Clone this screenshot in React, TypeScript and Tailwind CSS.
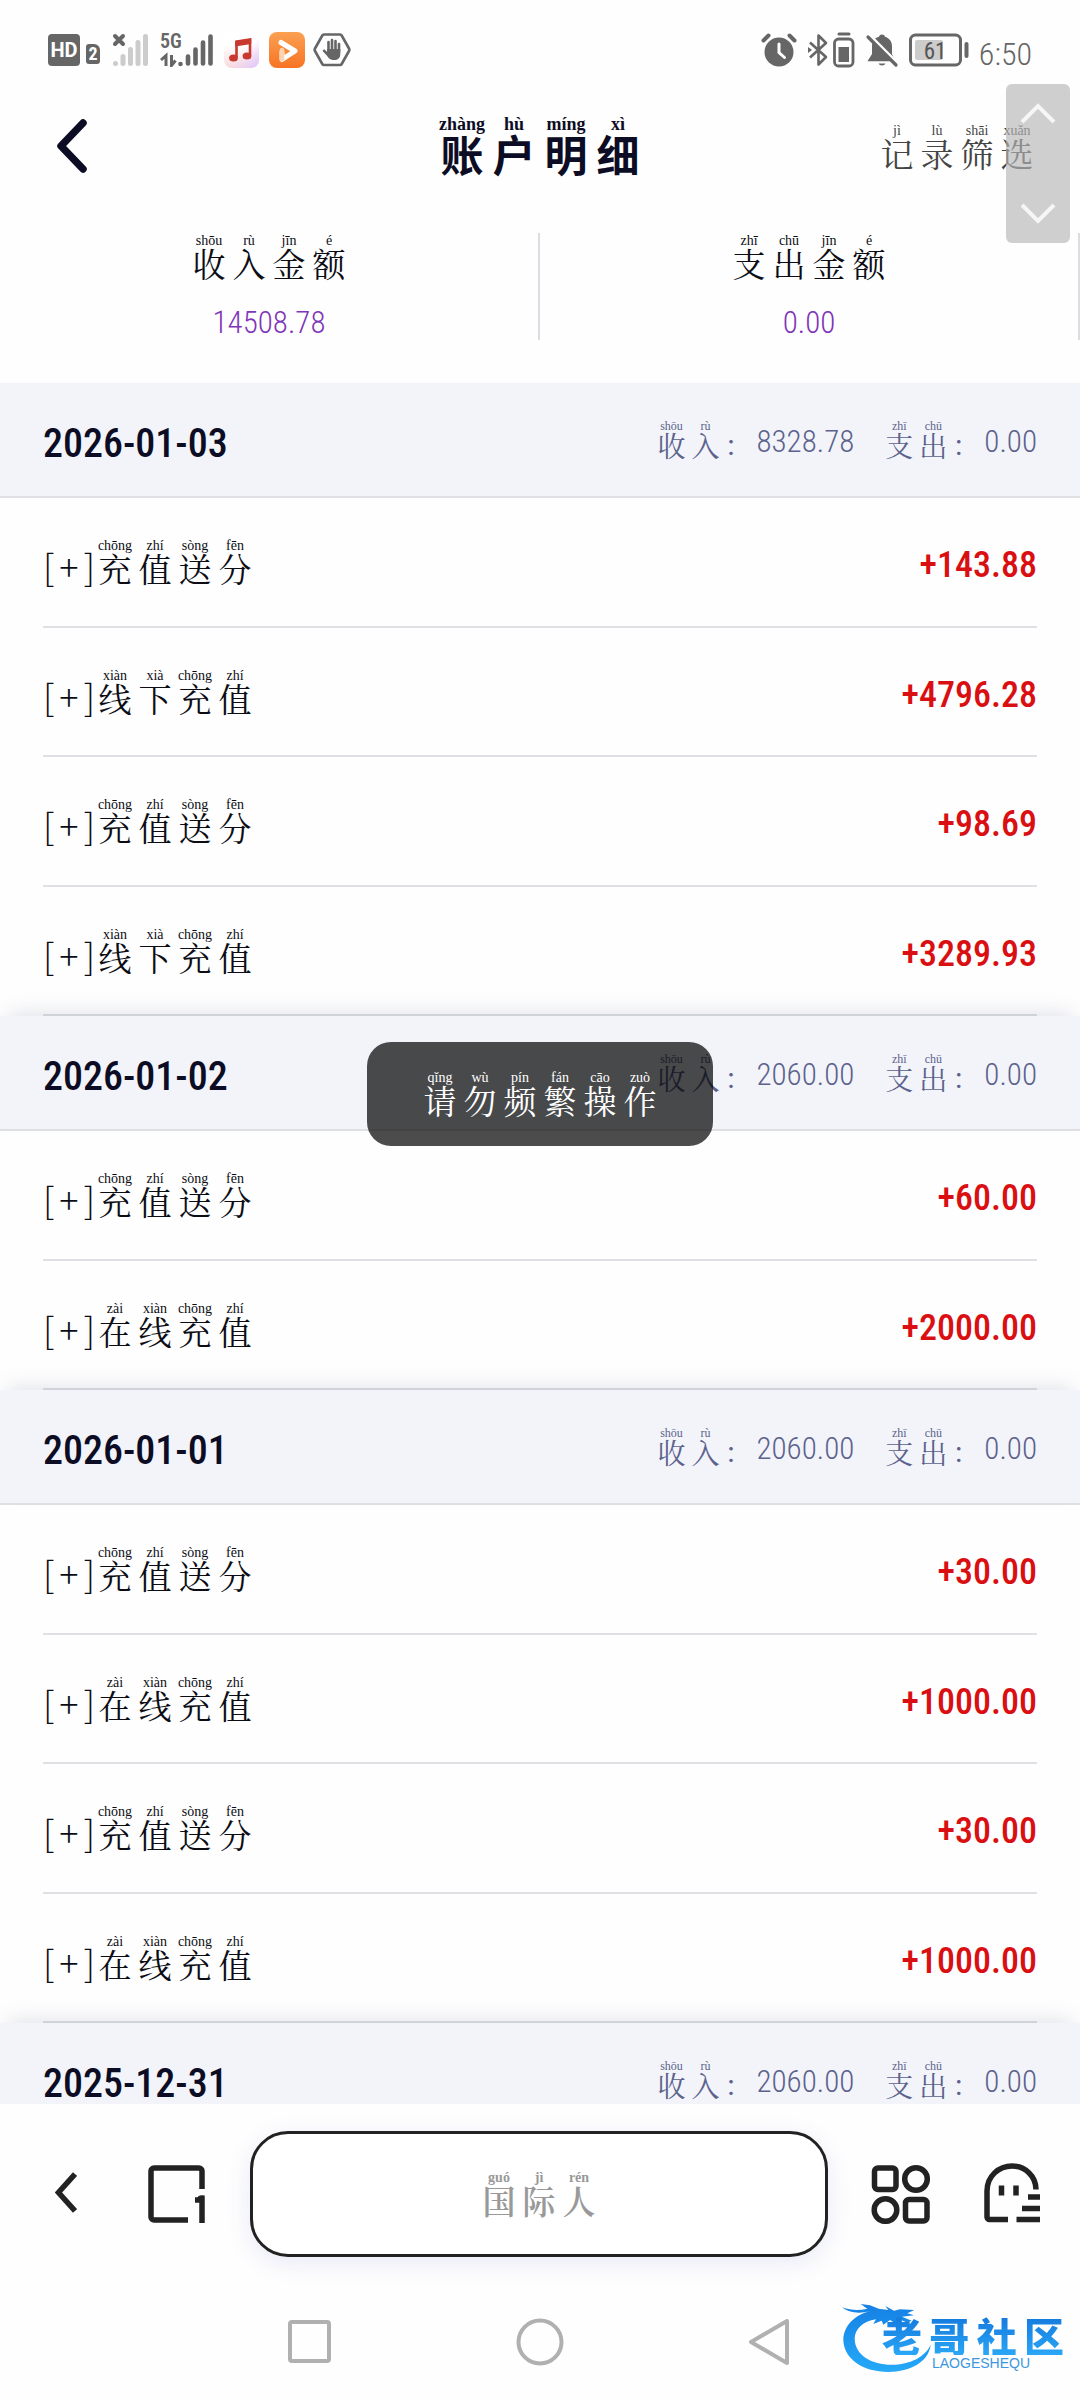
import type { ReactNode } from "react";

type Syllable = [char: string, pinyin: string];
type RubySize = "title" | "body" | "small";

const WORDS = {
  title: [["账", "zhàng"], ["户", "hù"], ["明", "míng"], ["细", "xì"]],
  filter: [["记", "jì"], ["录", "lù"], ["筛", "shāi"], ["选", "xuǎn"]],
  incomeTotal: [["收", "shōu"], ["入", "rù"], ["金", "jīn"], ["额", "é"]],
  expenseTotal: [["支", "zhī"], ["出", "chū"], ["金", "jīn"], ["额", "é"]],
  income: [["收", "shōu"], ["入", "rù"]],
  expense: [["支", "zhī"], ["出", "chū"]],
  bonus: [["充", "chōng"], ["值", "zhí"], ["送", "sòng"], ["分", "fēn"]],
  offline: [["线", "xiàn"], ["下", "xià"], ["充", "chōng"], ["值", "zhí"]],
  online: [["在", "zài"], ["线", "xiàn"], ["充", "chōng"], ["值", "zhí"]],
  toast: [["请", "qǐng"], ["勿", "wù"], ["频", "pín"], ["繁", "fán"], ["操", "cāo"], ["作", "zuò"]],
  site: [["国", "guó"], ["际", "jì"], ["人", "rén"]],
} satisfies Record<string, Syllable[]>;

const RUBY: Record<RubySize, { cell: string; char: string; pinyin: string }> = {
  title: {
    cell: "w-[52px] pb-0.5",
    char: "font-['Noto_Sans_CJK_SC',sans-serif] text-[43px] leading-[40px] font-bold",
    pinyin: "text-[18px] leading-[18px] font-bold",
  },
  body: {
    cell: "w-10 pb-0.5",
    char: "text-[33px] leading-[30px]",
    pinyin: "text-[14px] leading-[14px]",
  },
  small: {
    cell: "w-[34px] pb-0.5",
    char: "text-[28px] leading-[26px]",
    pinyin: "text-[12px] leading-[12px]",
  },
};

function Pinyin({ word, size = "body" }: { word: Syllable[]; size?: RubySize }) {
  const s = RUBY[size];
  return (
    <span className="flex">
      {word.map(([char, pinyin], i) => (
        <ruby key={i} className={`flex flex-col-reverse items-center ${s.cell}`}>
          <span className={s.char}>{char}</span>
          <rt className={`block font-['Liberation_Serif',serif] whitespace-nowrap ${s.pinyin}`}>{pinyin}</rt>
        </ruby>
      ))}
    </span>
  );
}

interface Day {
  date: string;
  income: string;
  rows: [Syllable[], string][];
}

const DAYS: Day[] = [
  {
    date: "2026-01-03",
    income: "8328.78",
    rows: [
      [WORDS.bonus, "+143.88"],
      [WORDS.offline, "+4796.28"],
      [WORDS.bonus, "+98.69"],
      [WORDS.offline, "+3289.93"],
    ],
  },
  { date: "2026-01-02", income: "2060.00", rows: [[WORDS.bonus, "+60.00"], [WORDS.online, "+2000.00"]] },
  {
    date: "2026-01-01",
    income: "2060.00",
    rows: [
      [WORDS.bonus, "+30.00"],
      [WORDS.online, "+1000.00"],
      [WORDS.bonus, "+30.00"],
      [WORDS.online, "+1000.00"],
    ],
  },
  { date: "2025-12-31", income: "2060.00", rows: [] },
];

function StatusBar() {
  return (
    <div className="flex h-[84px] shrink-0 items-center justify-between pt-4 pr-12 pl-12 font-['Roboto_Condensed',sans-serif] text-[#666]">
      <div className="flex items-center">
        <span className="flex h-8 w-8 items-center justify-center rounded bg-[#666] font-['Roboto',sans-serif] text-[20px] leading-[32px] font-bold text-white">HD</span>
        <span className="mt-2 ml-1.5 flex h-5 w-[14px] items-center justify-center rounded-[3px] rounded-tr-[6px] bg-[#666] text-[18px] leading-[20px] font-bold text-white">2</span>
        <svg className="ml-3" width="36" height="34" viewBox="0 0 36 34" fill="none" strokeLinecap="round">
          <path d="M3 3l8 8M11 3l-8 8" stroke="#666" strokeWidth="4" />
          <path d="M3.500 30.500v0M11 23.500v7M18.500 16.500v14M26 9.500v21M33.500 3.500v27" stroke="#ccc" strokeWidth="5" />
        </svg>
        <svg className="ml-3" width="54" height="34" viewBox="0 0 54 34" fill="none">
          <text x="0" y="15" fontSize="20" fontWeight="600" fill="#666">5G</text>
          <path d="M1 27l5-4.500V33M11.500 22v10.500l4-5" stroke="#666" strokeWidth="3" />
          <path d="M20.500 31v0M28 23.500v7M35.500 16.500v14M43 9.500v21M50.500 3.500v27" stroke="#666" strokeWidth="4.600" strokeLinecap="round" />
        </svg>
        <svg className="ml-2.5" width="35" height="36" viewBox="0 0 35 36">
          <defs>
            <linearGradient id="music" x1="0" y1="0" x2="0" y2="1">
              <stop offset="0.350" stopColor="#fff" />
              <stop offset="1" stopColor="#f9d9dc" />
            </linearGradient>
            <linearGradient id="tint" x1="0" y1="0" x2="1" y2="1">
              <stop offset="0.550" stopColor="#e6d0ff" stopOpacity="0" />
              <stop offset="1" stopColor="#dcc4ff" />
            </linearGradient>
          </defs>
          <rect width="35" height="36" rx="8" fill="url(#music)" />
          <rect width="35" height="36" rx="8" fill="url(#tint)" />
          <path d="M12.500 25.500V10l13.500-2v15.500" fill="none" stroke="#c8382e" strokeWidth="2.600" />
          <path d="M11.200 8.500L27.300 6v6l-16.100 2.500z" fill="#c8382e" />
          <ellipse cx="9.500" cy="26" rx="4.400" ry="3.500" fill="#c8382e" />
          <ellipse cx="23" cy="24" rx="4.400" ry="3.500" fill="#c8382e" />
        </svg>
        <svg className="ml-2.5" width="36" height="36" viewBox="0 0 36 36">
          <defs>
            <linearGradient id="play" x1="0" y1="0" x2="0" y2="1">
              <stop offset="0" stopColor="#fba052" />
              <stop offset="1" stopColor="#f77424" />
            </linearGradient>
          </defs>
          <rect width="36" height="36" rx="8" fill="url(#play)" />
          <path d="M12 10.500L26 19L13 27.500V20" fill="none" stroke="#fff" strokeWidth="5" strokeLinejoin="round" strokeLinecap="round" />
          <path d="M13 18v9" stroke="#ffd3b0" strokeWidth="4.500" strokeLinecap="round" />
        </svg>
        <svg className="ml-2" width="38" height="36" viewBox="0 0 38 36" fill="none">
          <path d="M11 2.500h16a2 2 0 0 1 1.700 1L36 16.500a2.500 2.500 0 0 1 0 2.500l-7.300 13a2 2 0 0 1-1.700 1H11a2 2 0 0 1-1.700-1L2 19a2.500 2.500 0 0 1 0-2.500l7.300-13a2 2 0 0 1 1.700-1z" stroke="#666" strokeWidth="2.600" />
          <path d="M15.500 20V10M19 19V8M22.500 19V9M26 20v-8" stroke="#666" strokeWidth="2.600" strokeLinecap="round" />
          <path d="M14.200 17h13.100v5c0 4-2.500 6-6 6-4 0-5.500-1.500-7.500-4.500L10 19.500c-.8-1.500.8-2.500 2-1.500l2.200 2z" fill="#666" />
        </svg>
      </div>
      <div className="flex items-center">
        <svg width="36" height="36" viewBox="0 0 36 36" fill="none">
          <circle cx="18" cy="20" r="14.500" fill="#666" />
          <path d="M2.500 8.500l5-5M33.500 8.500l-5-5" stroke="#666" strokeWidth="4" strokeLinecap="round" />
          <path d="M18 12v8.500l5.500 5" stroke="#fff" strokeWidth="3" strokeLinecap="round" />
        </svg>
        <svg className="ml-2.5" width="48" height="36" viewBox="0 0 48 36" fill="none" stroke="#666">
          <path d="M3 10.500L19 25l-7.500 7.500v-29L19 11 3 25.500" strokeWidth="2.600" strokeLinejoin="round" />
          <path d="M1 15l4 3-4 3z" fill="#666" stroke="none" />
          <path d="M32 2h10" strokeWidth="3" strokeLinecap="round" />
          <rect x="27.500" y="7" width="18.500" height="27" rx="4" strokeWidth="2.800" />
          <rect x="31.500" y="15" width="10.500" height="15" fill="#666" stroke="none" />
        </svg>
        <svg className="ml-2.5" width="34" height="36" viewBox="0 0 34 36" fill="none">
          <path d="M17 2.500c1.600 0 2.600.8 3 2.200 4.500 1.300 7 5 7 9.500v8l3.500 7H2.500L7 22v-8c0-4.500 2.500-8 7-9.300.4-1.400 1.400-2.200 3-2.200z" fill="#666" />
          <path d="M13.500 31.500h7c-1 2.500-6 2.500-7 0z" fill="#666" />
          <path d="M4 2.500l29 29" stroke="#fff" strokeWidth="3" />
          <path d="M3 5l28 28" stroke="#666" strokeWidth="3.200" strokeLinecap="round" />
        </svg>
        <svg className="ml-2.5" width="60" height="34" viewBox="0 0 60 34" fill="none">
          <rect x="1.500" y="2" width="50" height="30" rx="5" stroke="#666" strokeWidth="3" />
          <rect x="6" y="7" width="28" height="20" rx="2" fill="#ccc" />
          <path d="M57.500 11v12" stroke="#666" strokeWidth="4" strokeLinecap="round" />
          <text x="26" y="26" textAnchor="middle" fontSize="23" fill="#555">61</text>
        </svg>
        <span className="ml-2.5 pt-2 text-[32px] leading-[32px] font-light">6:50</span>
      </div>
    </div>
  );
}

function Total({ word, amount }: { word: Syllable[]; amount: string }) {
  return (
    <div className="flex h-[107px] flex-1 flex-col items-center gap-7 border-r-2 border-[#dcdde2] pt-px">
      <Pinyin word={word} />
      <span className="font-['Roboto_Condensed',sans-serif] text-[31px] leading-[30px] font-light text-[#7f35b8]">{amount}</span>
    </div>
  );
}

function Subtotal({ word, amount }: { word: Syllable[]; amount: string }) {
  return (
    <span className="flex items-end">
      <Pinyin word={word} size="small" />
      <span className="w-[34px] pb-0.5 pl-0.5 text-[28px] leading-[28px]">：</span>
      <span className="pb-1.5 font-['Roboto_Condensed',sans-serif] text-[31px] leading-[24px] font-light">{amount}</span>
    </span>
  );
}

function DaySection({ day, first }: { day: Day; first: boolean }) {
  return (
    <section>
      <header
        className={`relative flex h-[115px] items-center justify-between border-b-2 border-[#dfe0e4] bg-[#f2f4fa] px-[43px] ${
          first ? "" : "shadow-[0_-10px_20px_-8px_rgba(60,70,120,0.16)]"
        }`}
      >
        <h2 className="pt-2 font-['Roboto_Condensed',sans-serif] text-[40px] leading-[42px] font-medium text-[#0c0d24]">{day.date}</h2>
        <p className="flex gap-7 text-[#5c628c]">
          <Subtotal word={WORDS.income} amount={day.income} />
          <Subtotal word={WORDS.expense} amount="0.00" />
        </p>
      </header>
      <ul className="px-[43px]">
        {day.rows.map(([word, amount], i) => (
          <li key={i} className="flex h-[129px] items-center justify-between border-b-2 border-[#dfe0e4] odd:h-[130px]">
            <span className="flex items-end text-[#0c0d14]">
              <span className="flex w-[52px] justify-between pb-1 font-['Noto_Sans_CJK_SC',sans-serif] text-[36px] leading-[32px] font-light">
                <span>[</span>
                <span>+</span>
                <span>]</span>
              </span>
              <Pinyin word={word} />
            </span>
            <span className="pt-1.5 font-['Roboto_Condensed',sans-serif] text-[36px] leading-[38px] font-medium text-[#d90f12]">{amount}</span>
          </li>
        ))}
      </ul>
    </section>
  );
}

function ToolButton({ label, className, children }: { label: string; className: string; children: ReactNode }) {
  return (
    <button type="button" aria-label={label} className={`shrink-0 ${className}`}>
      {children}
    </button>
  );
}

function Toolbar() {
  return (
    <div className="flex h-[180px] shrink-0 items-start pt-[27px] pr-10 pl-[55px] text-[#222]">
      <ToolButton label="后退" className="mt-10 mr-[71px]">
        <svg width="22" height="44" viewBox="0 0 22 44" fill="none" stroke="currentColor" strokeWidth="5.500">
          <path d="M20 3L3.500 21.500L20 40" />
        </svg>
      </ToolButton>
      <ToolButton label="标签页" className="mt-[34px] mr-[45px]">
        <svg width="57" height="58" viewBox="0 0 57 58" fill="none" stroke="currentColor" strokeWidth="5.500">
          <path d="M54 24V6a3 3 0 0 0-3-3H6a3 3 0 0 0-3 3v46a3 3 0 0 0 3 3h34" />
          <path d="M47 35h4a3 3 0 0 1 3-2v25" />
        </svg>
      </ToolButton>
      <button
        type="button"
        className="flex h-[126px] flex-1 items-center justify-center rounded-[38px] border-[3px] border-[#222] bg-white font-semibold text-[#999] shadow-[0_6px_24px_rgba(70,80,200,0.12)]"
      >
        <Pinyin word={WORDS.site} />
      </button>
      <ToolButton label="应用" className="mt-[33px] ml-[43px]">
        <svg width="60" height="60" viewBox="0 0 60 60" fill="none" stroke="currentColor" strokeWidth="5.500">
          <rect x="3.500" y="4" width="21.500" height="21.500" rx="3.500" />
          <circle cx="45" cy="15" r="11.300" />
          <circle cx="14.500" cy="46" r="11.300" />
          <rect x="34.500" y="35.500" width="21.500" height="21.500" rx="3.500" />
        </svg>
      </ToolButton>
      <ToolButton label="我的" className="mt-8 ml-[53px]">
        <svg width="56" height="60" viewBox="0 0 56 60" fill="none" stroke="currentColor" strokeWidth="5.500">
          <path d="M52 26.500C52 13 41 3 28 3S3 13 3 28v26a2.500 2.500 0 0 0 2.500 2.500H24" />
          <path d="M17.500 22.500v10M32 22.500v10M44 34h12M38 45.500h18M32.500 56.500H56" />
        </svg>
      </ToolButton>
    </div>
  );
}

function SystemNav() {
  return (
    <nav className="flex h-[116px] shrink-0 items-center justify-center gap-[182px] text-[#b0b0b0]">
      <ToolButton label="最近任务" className="">
        <svg width="48" height="48" viewBox="0 0 48 48" fill="none" stroke="currentColor" strokeWidth="4">
          <rect x="4" y="4" width="39" height="39" rx="2" />
        </svg>
      </ToolButton>
      <ToolButton label="主屏幕" className="">
        <svg width="48" height="48" viewBox="0 0 48 48" fill="none" stroke="currentColor" strokeWidth="4">
          <circle cx="24" cy="24" r="21.500" />
        </svg>
      </ToolButton>
      <ToolButton label="返回" className="">
        <svg width="48" height="48" viewBox="0 0 48 48" fill="none" stroke="currentColor" strokeWidth="4" strokeLinejoin="round">
          <path d="M41 3v42L5 24z" />
        </svg>
      </ToolButton>
    </nav>
  );
}

function Watermark() {
  return (
    <div className="pointer-events-none absolute right-4 bottom-6 h-[74px] w-[224px]">
      <svg className="absolute top-0 left-0" width="94" height="72" viewBox="60 40 282 216">
        <defs>
          <linearGradient id="dragon" x1="0" y1="0" x2="0" y2="1">
            <stop offset="0" stopColor="#1580e4" />
            <stop offset="1" stopColor="#25a9f8" />
          </linearGradient>
        </defs>
        <path
          fill="url(#dragon)"
          d="M150 68C100 80 70 115 70 155C72 212 130 250 205 250C272 248 326 220 332 168C315 205 270 228 215 228C155 228 105 200 104 150C104 122 128 98 168 92L160 106L185 96L190 108L210 94L225 104L238 92L262 102L275 96L246 84L282 80L262 74L283 64L240 62L222 66L196 52L205 64L176 60L150 50L122 46L142 60C118 66 95 66 66 56C84 72 115 76 150 68Z"
        />
      </svg>
      <div className="absolute top-[13px] left-[42px] flex w-[182px] justify-between bg-linear-to-b from-[#1478dc] to-[#2ba6f6] bg-clip-text font-['Noto_Sans_CJK_SC',sans-serif] text-[40px] leading-[40px] font-black text-transparent">
        <span>老</span>
        <span>哥</span>
        <span>社</span>
        <span>区</span>
      </div>
      <span className="absolute top-[54px] left-[92px] font-['Liberation_Sans',sans-serif] text-[14px] leading-[14px] text-[#3c97e0]">LAOGESHEQU</span>
    </div>
  );
}

export default function App() {
  return (
    <div className="relative flex h-screen flex-col overflow-hidden bg-[#fefefe] font-['Noto_Serif_CJK_SC',serif] text-[#0c0d14]">
      <StatusBar />
      <header className="grid h-[122px] shrink-0 grid-cols-[1fr_auto_1fr] items-center px-[43px]">
        <ToolButton label="返回" className="justify-self-start pl-3">
          <svg width="34" height="56" viewBox="0 0 34 56" fill="none" stroke="#0c0d24" strokeWidth="7.500" strokeLinecap="round" strokeLinejoin="round">
            <path d="M28 6L6 29L28 52" />
          </svg>
        </ToolButton>
        <h1 className="text-[#0c0d24]">
          <Pinyin word={WORDS.title} size="title" />
        </h1>
        <button type="button" className="justify-self-end pt-1 text-[#444]">
          <Pinyin word={WORDS.filter} />
        </button>
      </header>
      <div className="flex shrink-0 pt-[27px] pb-[43px]">
        <Total word={WORDS.incomeTotal} amount="14508.78" />
        <Total word={WORDS.expenseTotal} amount="0.00" />
      </div>
      <main className="min-h-0 flex-1 overflow-hidden">
        {DAYS.map((day, i) => (
          <DaySection key={day.date} day={day} first={i === 0} />
        ))}
      </main>
      <Toolbar />
      <SystemNav />
      <div className="absolute top-[84px] right-2.5 flex h-[159px] w-16 flex-col items-center justify-between rounded-md bg-[#b6b6b6]/65 py-4">
        <ToolButton label="向上滚动" className="">
          <svg width="36" height="28" viewBox="0 0 36 28" fill="none" stroke="#f6f6f6" strokeWidth="4">
            <path d="M2 22L18 6L34 22" />
          </svg>
        </ToolButton>
        <ToolButton label="向下滚动" className="">
          <svg width="36" height="28" viewBox="0 0 36 28" fill="none" stroke="#f6f6f6" strokeWidth="4">
            <path d="M2 6L18 22L34 6" />
          </svg>
        </ToolButton>
      </div>
      <div role="status" className="absolute top-[1042px] left-1/2 -translate-x-1/2 rounded-3xl bg-black/70 px-[53px] py-[29px] text-white">
        <Pinyin word={WORDS.toast} />
      </div>
      <Watermark />
    </div>
  );
}
